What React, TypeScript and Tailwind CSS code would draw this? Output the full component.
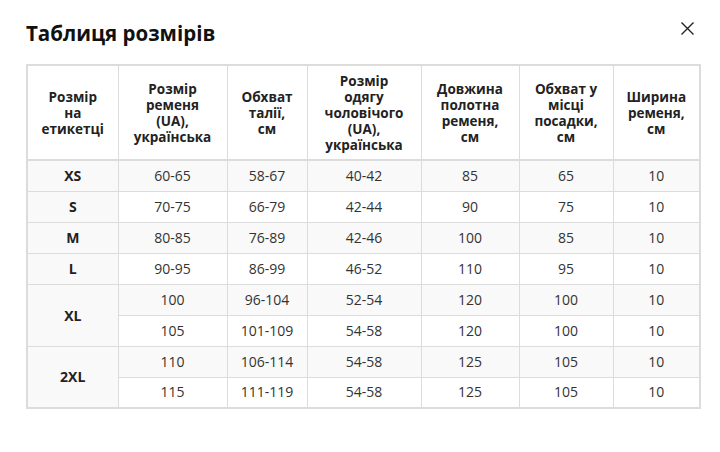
import React from "react";

const headers = [
  ["Розмір", "на", "етикетці"],
  ["Розмір", "ременя", "(UA),", "українська"],
  ["Обхват", "талії,", "см"],
  ["Розмір", "одягу", "чоловічого", "(UA),", "українська"],
  ["Довжина", "полотна", "ременя,", "см"],
  ["Обхват у", "місці", "посадки,", "см"],
  ["Ширина", "ременя,", "см"],
];

const widths = ["w-[91px]", "w-[109px]", "w-[80px]", "w-[114px]", "w-[98px]", "w-[94px]", "w-[87px]"];

type Row = { size?: string; span?: number; cells: string[]; stripe: boolean };

const rows: Row[] = [
  { size: "XS", cells: ["60-65", "58-67", "40-42", "85", "65", "10"], stripe: true },
  { size: "S", cells: ["70-75", "66-79", "42-44", "90", "75", "10"], stripe: false },
  { size: "M", cells: ["80-85", "76-89", "42-46", "100", "85", "10"], stripe: true },
  { size: "L", cells: ["90-95", "86-99", "46-52", "110", "95", "10"], stripe: false },
  { size: "XL", span: 2, cells: ["100", "96-104", "52-54", "120", "100", "10"], stripe: true },
  { cells: ["105", "101-109", "54-58", "120", "100", "10"], stripe: false },
  { size: "2XL", span: 2, cells: ["110", "106-114", "54-58", "125", "105", "10"], stripe: true },
  { cells: ["115", "111-119", "54-58", "125", "105", "10"], stripe: false },
];

export default function App() {
  return (
    <div
      className="w-[720px] h-[452px] bg-white px-[26px] pt-[19px] text-[#333]"
      style={{ fontFamily: '"Open Sans", "Noto Sans", sans-serif' }}
    >
      <div className="flex items-start justify-between">
        <h1 className="text-[20.5px] leading-[28px] font-bold text-[#111]">Таблиця розмірів</h1>
        <svg className="mt-[3px]" width="13" height="13" viewBox="0 0 13 13" fill="none">
          <path d="M0.5 0.5L12.5 12.5M12.5 0.5L0.5 12.5" stroke="#222" strokeWidth="1.4" />
        </svg>
      </div>
      <table className="mt-[17px] w-[673px] border-collapse border-2 border-[#dcdcdc] text-[14px] table-fixed">
        <colgroup>
          {widths.map((w, i) => (
            <col key={i} className={w} />
          ))}
        </colgroup>
        <thead>
          <tr className="border-b-2 border-[#dcdcdc]">
            {headers.map((h, i) => (
              <th
                key={i}
                className="h-[95px] border border-[#dcdcdc] border-b-2 px-1 text-center align-middle font-bold text-[13.5px] leading-[16px] text-[#222]"
              >
                {h.map((l, j) => (
                  <React.Fragment key={j}>
                    {j > 0 && <br />}
                    {l}
                  </React.Fragment>
                ))}
              </th>
            ))}
          </tr>
        </thead>
        <tbody>
          {rows.map((r, i) => (
            <tr key={i} className={r.stripe ? "bg-[#f9f9f9]" : "bg-white"}>
              {r.size && (
                <td
                  rowSpan={r.span ?? 1}
                  className="border border-[#dcdcdc] bg-[#f9f9f9] text-center align-middle font-bold text-[#222]"
                >
                  {r.size}
                </td>
              )}
              {r.cells.map((c, j) => (
                <td key={j} className="h-[31px] border border-[#dcdcdc] p-0 text-center align-middle leading-[16px]">
                  {c}
                </td>
              ))}
            </tr>
          ))}
        </tbody>
      </table>
    </div>
  );
}
